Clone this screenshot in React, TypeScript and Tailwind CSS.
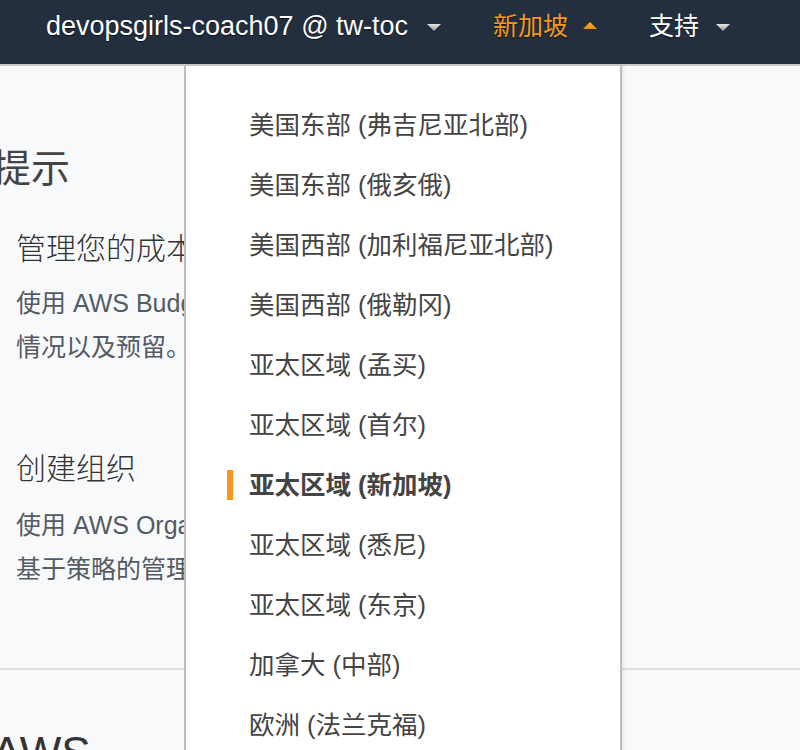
import React from "react";

const Caret = ({ up = false, color = "gray" }: { up?: boolean; color?: "gray" | "orange" }) => (
  <svg width="14" height="8" viewBox="0 0 14 8" className="shrink-0">
    <defs>
      <linearGradient id={`g-${color}-${up ? "u" : "d"}`} x1="0" y1="0" x2="0" y2="1">
        {color === "gray" ? (
          <>
            <stop offset="0" stopColor="#e6e6e6" />
            <stop offset="1" stopColor="#9a9a9a" />
          </>
        ) : (
          <>
            <stop offset="0" stopColor="#ffb13b" />
            <stop offset="1" stopColor="#f08c00" />
          </>
        )}
      </linearGradient>
    </defs>
    {up ? (
      <polygon points="0,8 14,8 7,1" fill={`url(#g-${color}-u)`} />
    ) : (
      <polygon points="0,1 14,1 7,8" fill={`url(#g-${color}-d)`} />
    )}
  </svg>
);

const regions = [
  "美国东部 (弗吉尼亚北部)",
  "美国东部 (俄亥俄)",
  "美国西部 (加利福尼亚北部)",
  "美国西部 (俄勒冈)",
  "亚太区域 (孟买)",
  "亚太区域 (首尔)",
  "亚太区域 (新加坡)",
  "亚太区域 (悉尼)",
  "亚太区域 (东京)",
  "加拿大 (中部)",
  "欧洲 (法兰克福)",
  "欧洲 (爱尔兰)",
];

export default function App() {
  return (
    <div className="relative w-[800px] h-[750px] overflow-hidden bg-[#f8f9fa] font-['Liberation_Sans','Noto_Sans_CJK_SC',sans-serif]">
      <header className="h-[66px] bg-[#232f3e] border-b-2 border-[#c9c9c9] flex items-start pt-[9px] pl-[46px] text-[27px] leading-[34px] [text-shadow:0_1px_1px_rgba(0,0,0,0.6)]">
        <div className="flex items-center text-white">
          <span>devopsgirls-coach07 @ tw-toc</span>
          <span className="ml-[19px] mt-[2px]">
            <Caret />
          </span>
        </div>
        <div className="flex items-center text-[#f7981d] ml-[52px] text-[25px]">
          <span>新加坡</span>
          <span className="ml-[15px] -mt-[2px]">
            <Caret up color="orange" />
          </span>
        </div>
        <div className="flex items-center text-white ml-[52px] text-[25px]">
          <span>支持</span>
          <span className="ml-[17px] mt-[2px]">
            <Caret />
          </span>
        </div>
      </header>

      <main className="flex flex-col text-[#444] whitespace-nowrap">
        <h1 className="mt-[78px] -ml-[8px] text-[39px] leading-[50px] font-normal">提示</h1>
        <h2 className="mt-[35px] ml-[16px] text-[30px] leading-[40px] font-light text-[#333]">管理您的成本和使用情况</h2>
        <div className="mt-[12px] ml-[16px] text-[25px] leading-[44px] text-[#545b64]">
          <p>使用 AWS Budgets 跟踪您的成本和使用</p>
          <p>情况以及预留。</p>
        </div>
        <h2 className="mt-[80px] ml-[16px] text-[30px] leading-[40px] font-light text-[#333]">创建组织</h2>
        <div className="mt-[14px] ml-[16px] text-[25px] leading-[44px] text-[#545b64]">
          <p>使用 AWS Organizations 对多个账户进行</p>
          <p>基于策略的管理。</p>
        </div>
        <div className="mt-[77px] h-[2px] bg-[#dedfe0]" />
        <h1 className="mt-[58px] -ml-[8px] text-[44px] leading-[50px] text-[#333]">AWS</h1>
      </main>

      <div className="absolute left-[184px] top-[66px] w-[438px] h-[700px] bg-white border-l-2 border-r-2 border-[#bdbdbd] shadow-[2px_0_3px_rgba(0,0,0,0.08)]">
        <ul className="pt-[29px] text-[25.5px] text-[#444]">
          {regions.map((r) => {
            const active = r === "亚太区域 (新加坡)";
            return (
              <li key={r} className="relative h-[60px] flex items-center pl-[63px]">
                {active && <span className="absolute left-[41px] top-[15px] w-[6px] h-[30px] bg-[#f7981d]" />}
                <span className={active ? "font-bold" : ""}>{r}</span>
              </li>
            );
          })}
        </ul>
      </div>
    </div>
  );
}
